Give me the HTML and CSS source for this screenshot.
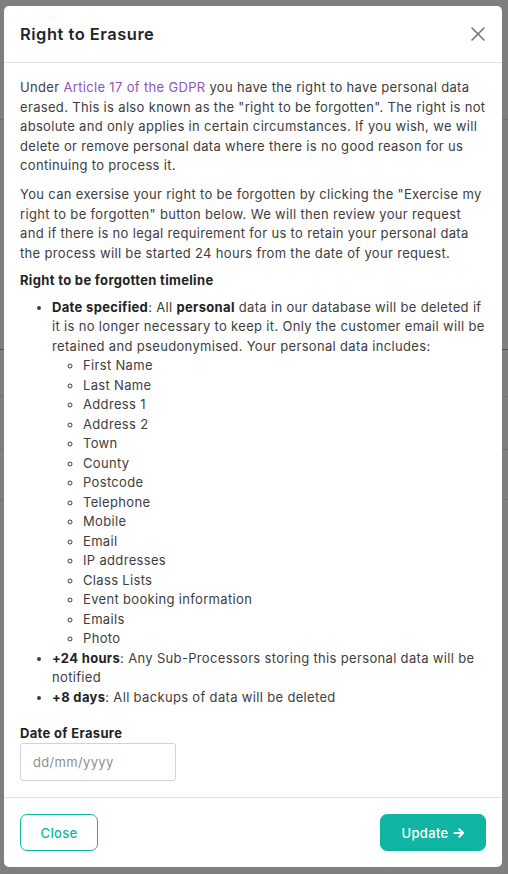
FILE: index.html
```html
<!DOCTYPE html>
<html lang="en">
<head>
<meta charset="utf-8">
<title>Right to Erasure</title>
<link rel="stylesheet" href="styles.css">
</head>
<body>
<div class="page">
  <div class="page-row r1"></div>
  <div class="page-row r2"></div>
  <div class="page-row r3"></div>
  <div class="page-row r4"></div>
  <div class="page-row r5"></div>
</div>
<div class="backdrop"></div>
<div class="modal" role="dialog" aria-labelledby="modal-title">
  <div class="modal-header">
    <h5 class="modal-title" id="modal-title">Right to Erasure</h5>
    <button class="btn-x" type="button" aria-label="Close">
      <svg width="16" height="16" viewBox="0 0 16 16" aria-hidden="true"><path d="M2 2L14 14M14 2L2 14" stroke="#6f757b" stroke-width="1.6" stroke-linecap="round" fill="none"/></svg>
    </button>
  </div>
  <div class="modal-body">
    <p class="p1">Under <a href="#" class="link">Article 17 of the GDPR</a> you have the right to have personal data erased. This is also known as the "right to be forgotten". The right is not absolute and only applies in certain circumstances. If you wish, we will delete or remove personal data where there is no good reason for us continuing to process it.</p>
    <p class="p2">You can exersise your right to be forgotten by clicking the "Exercise my right to be forgotten" button below. We will then review your request and if there is no legal requirement for us to retain your personal data the process will be started 24 hours from the date of your request.</p>
    <p class="heading">Right to be forgotten timeline</p>
    <ul class="timeline">
      <li><b>Date specified</b>: All <b>personal</b> data in our database will be deleted if it is no longer necessary to keep it. Only the customer email will be retained and pseudonymised. Your personal data includes:
        <ul class="sub">
          <li>First Name</li>
          <li>Last Name</li>
          <li>Address 1</li>
          <li>Address 2</li>
          <li>Town</li>
          <li>County</li>
          <li>Postcode</li>
          <li>Telephone</li>
          <li>Mobile</li>
          <li>Email</li>
          <li>IP addresses</li>
          <li>Class Lists</li>
          <li>Event booking information</li>
          <li>Emails</li>
          <li>Photo</li>
        </ul>
      </li>
      <li><b>+24 hours</b>: Any Sub-Processors storing this personal data will be notified</li>
      <li><b>+8 days</b>: All backups of data will be deleted</li>
    </ul>
    <label class="field-label" for="erasure-date">Date of Erasure</label>
    <input class="field-input" id="erasure-date" type="text" placeholder="dd/mm/yyyy">
  </div>
  <div class="modal-footer">
    <button class="btn btn-outline" type="button">Close</button>
    <button class="btn btn-solid" type="button">Update
      <svg width="12" height="12" viewBox="0 0 12 12" aria-hidden="true"><path d="M1.5 6H10M6.3 2.2L10.1 6L6.3 9.8" stroke="#fff" stroke-width="2" stroke-linecap="round" stroke-linejoin="round" fill="none"/></svg>
    </button>
  </div>
</div>
</body>
</html>
```
FILE: styles.css
```css
* { box-sizing: border-box; }
html, body { margin: 0; height: 100%; }
body {
  background: #fff;
  font-family: Inter, "Noto Sans", sans-serif;
  overflow: hidden;
}
.page { height: 874px; }
.page-row { border-bottom: 1px solid #dcdcdc; }
.r1 { height: 120px; }
.r2 { height: 230px; border-bottom: 1px solid #5ec2b4; }
.r3 { height: 47px; }
.r4 { height: 53px; }
.r5 { height: 50px; }
.backdrop {
  position: fixed;
  inset: 0;
  background: rgba(0, 0, 0, 0.5);
}
.modal {
  position: fixed;
  left: 4px;
  top: 6px;
  width: 498px;
  height: 861px;
  background: #fff;
  border-radius: 5px;
  display: flex;
  flex-direction: column;
  color: #3d3d3d;
  font-size: 13px;
  line-height: 19.5px;
  letter-spacing: 0.33px;
}
.modal-header {
  height: 57px;
  padding: 0 16px;
  display: flex;
  align-items: center;
  justify-content: space-between;
  border-bottom: 1px solid #e1e1e8;
}
.modal-title {
  margin: 0;
  font-size: 16.5px;
  font-weight: 600;
  letter-spacing: 0.5px;
  color: #23262b;
  line-height: 24px;
}
.btn-x {
  border: 0;
  background: none;
  padding: 0;
  margin-right: 0;
  width: 16px;
  height: 16px;
  display: flex;
}
.modal-body {
  flex: 1;
  padding: 15px 16px 16px;
}
.modal-body p { margin: 0; }
.p1 { margin-bottom: 9.5px !important; }
.p2 { margin-bottom: 7.5px !important; }
.heading { font-weight: 700; color: #232323; margin-bottom: 7.5px !important; }
.link { color: #8e55b6; text-decoration: none; }
b { font-weight: 700; color: #232323; }
.timeline {
  margin: 0 0 16.5px;
  padding-left: 32px;
}
.timeline > li + li { margin-top: 0; }
.sub {
  margin: 0;
  padding-left: 31px;
  list-style: circle;
}
.field-label {
  display: block;
  font-weight: 700;
  color: #232323;
}
.field-input {
  display: block;
  width: 156px;
  height: 38px;
  margin-top: 0;
  border: 1px solid #ced4da;
  border-radius: 3px;
  padding: 0 12px;
  font-family: inherit;
  font-size: 13px;
  letter-spacing: 0.33px;
  color: #3d3d3d;
}
.field-input::placeholder { color: #8b8f94; }
.modal-footer {
  border-top: 1px solid #dee2e6;
  padding: 16px 16px 16px;
  display: flex;
  justify-content: space-between;
  align-items: center;
}
.btn {
  height: 37px;
  border-radius: 7px;
  font-family: inherit;
  font-size: 13px;
  font-weight: 500;
  letter-spacing: 0.33px;
  display: flex;
  align-items: center;
  justify-content: center;
  gap: 4px;
  cursor: pointer;
}
.btn-outline {
  width: 78px;
  background: #fff;
  border: 1px solid #10b4a2;
  color: #10b4a2;
}
.btn-solid {
  width: 106px;
  background: #10b4a2;
  border: 1px solid #10b4a2;
  color: #fff;
}
```
